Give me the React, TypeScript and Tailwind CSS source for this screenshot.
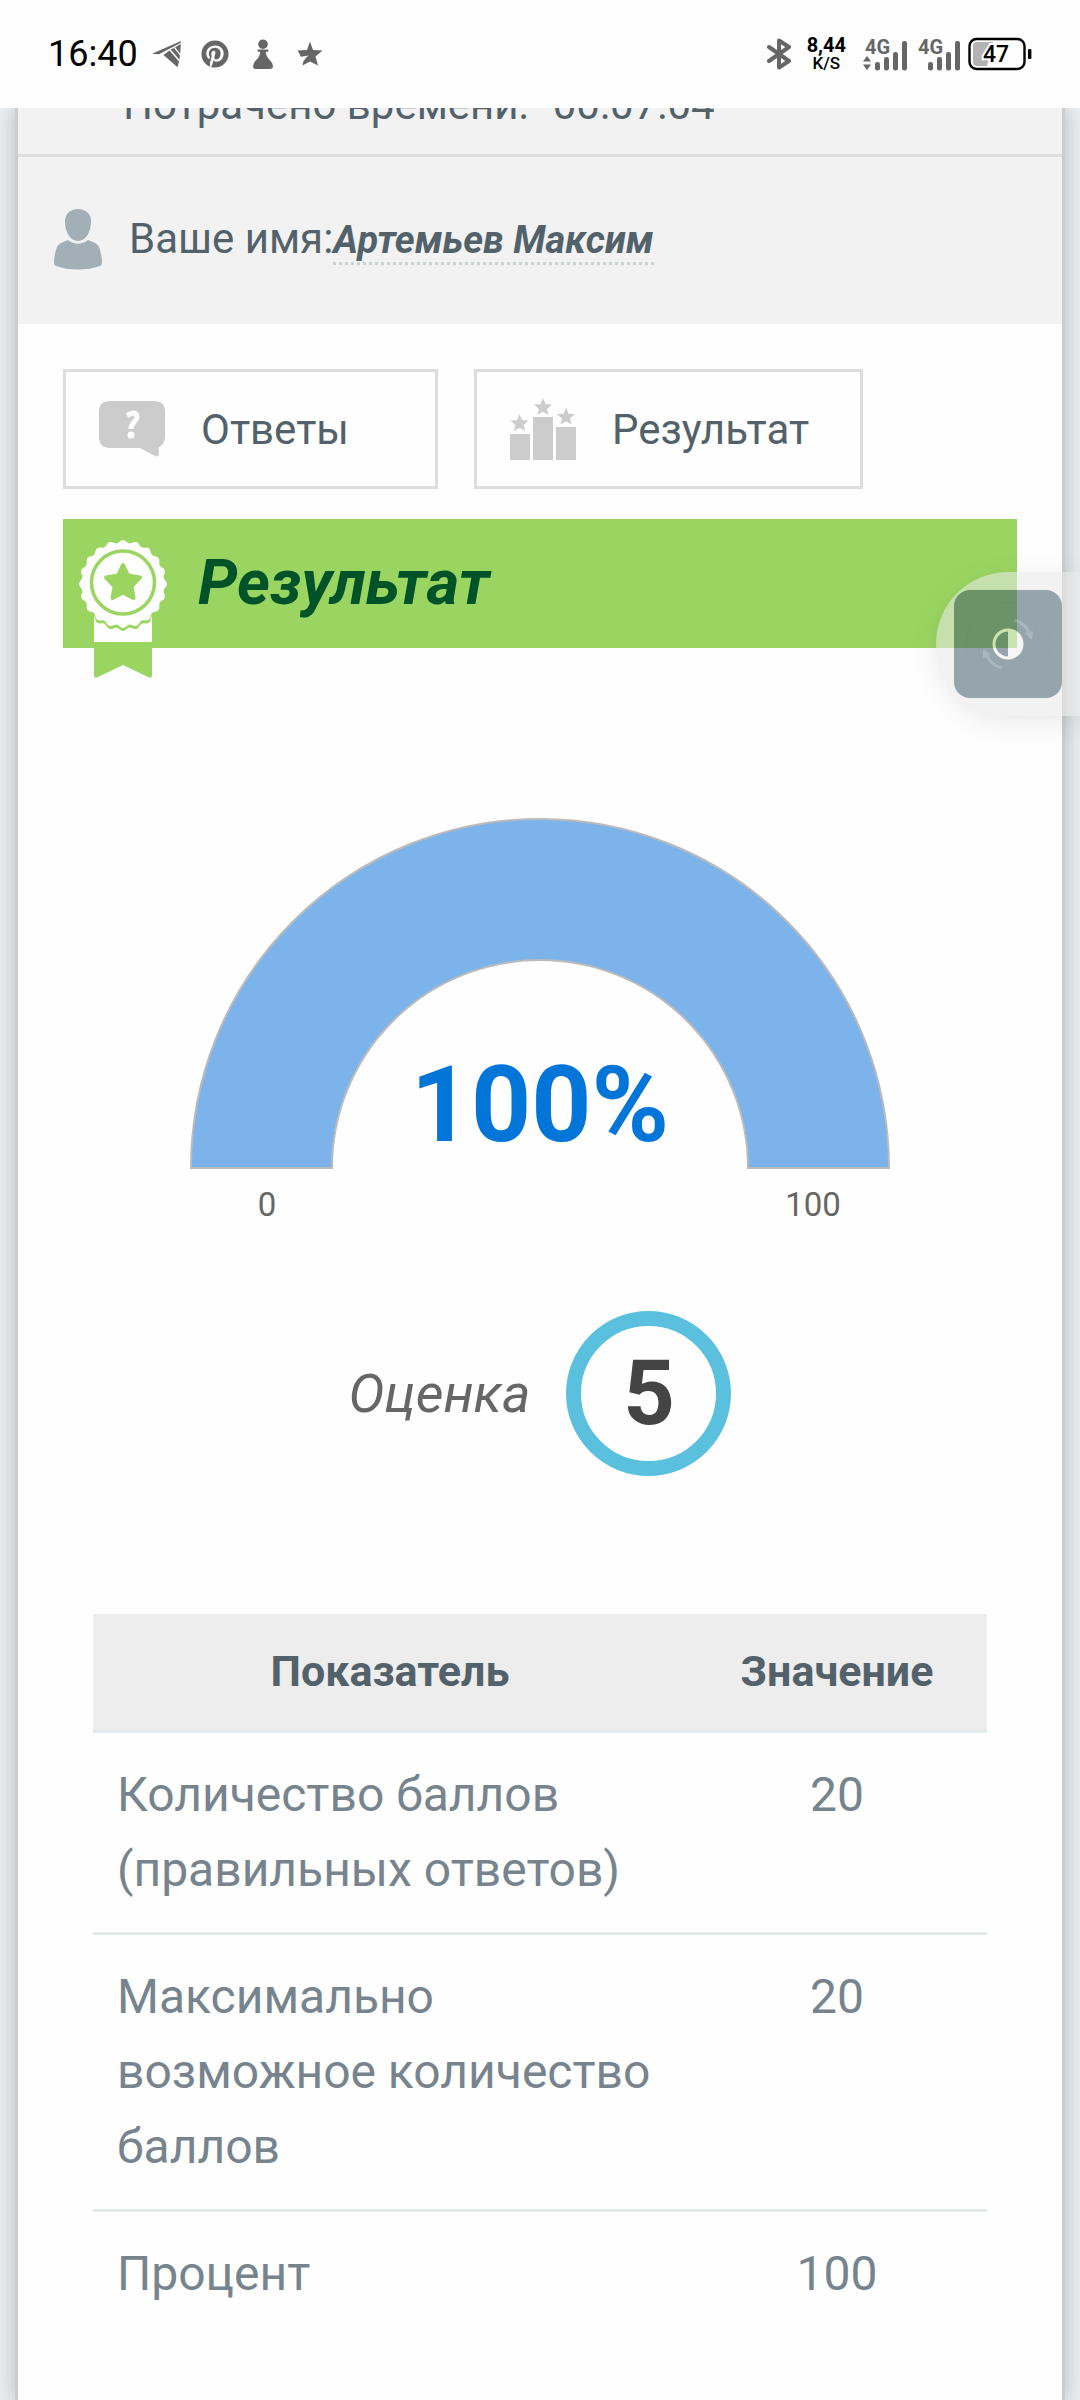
import { FaPinterest } from "react-icons/fa";

const rows = [
  { label: "Количество баллов (правильных ответов)", value: "20" },
  { label: "Максимально возможное количество баллов", value: "20" },
  { label: "Процент", value: "100" },
];

export default function App() {
  return (
    <div className="relative min-h-screen overflow-hidden bg-[#e9edef] font-['Roboto',sans-serif] text-[#53626a]">
      <StatusBar />

      <main className="mx-[15px] min-h-[2292px] border-x-[3px] border-[#cbcccb] bg-[#fefefe] shadow-[0_0_18px_rgba(0,0,0,0.22)]">
        <section className="bg-[#f2f2f2] text-[42px] leading-[60px]">
          <div className="flex gap-6 border-b-[3px] border-[#dddddd] pb-[19px] pl-[105px]">
            <span className="-mt-[33px]">Потрачено времени:</span>
            <span className="-mt-[33px]">00:07:04</span>
          </div>
          <div className="flex items-center pt-[51px] pb-[54px] pl-[35px]">
            <UserIcon />
            <p className="pl-[26px]">
              Ваше имя:
              <span className="border-b-[3px] border-dotted border-[#ccd3d7] text-[38px] font-bold italic">Артемьев Максим</span>
            </p>
          </div>
        </section>

        <div className="px-[45px] pt-[45px]">
          <div className="flex gap-9">
            <TabButton label="Ответы" icon={<AnswersIcon />} />
            <TabButton label="Результат" icon={<PodiumIcon />} />
          </div>

          <div className="relative mt-[30px] flex h-[129px] items-center bg-[#9bd561] pl-[135px]">
            <Badge />
            <h1 className="text-[63px] font-bold italic text-[#005229]">Результат</h1>
          </div>
        </div>

        <Gauge />

        <div className="mt-[84px] flex items-center justify-center gap-9">
          <span className="text-[54px] italic text-[#666666]">Оценка</span>
          <span className="flex size-[165px] items-center justify-center rounded-full border-[15px] border-[#5bc0de] text-[90px] font-bold text-[#444444]">5</span>
        </div>

        <div className="px-[75px] pt-[138px]">
          <table className="w-full border-collapse">
            <thead>
              <tr className="border-b-[3px] border-[#e4e9eb] bg-[#ededed] text-[43px] leading-[67px]">
                <th className="px-6 pt-6 pb-[25px] font-bold">Показатель</th>
                <th className="w-[300px] px-6 pt-6 pb-[25px] font-bold">Значение</th>
              </tr>
            </thead>
            <tbody>
              {rows.map((r) => (
                <tr key={r.label} className="border-b-[3px] border-[#e4e9eb] text-[48px] leading-[75px] text-[#77848e] last:border-b-0">
                  <td className="px-6 pt-6 pb-[25px] align-top">{r.label}</td>
                  <td className="px-6 pt-6 pb-[25px] text-center align-top">{r.value}</td>
                </tr>
              ))}
            </tbody>
          </table>
        </div>
      </main>

      {/* floating theme switch, docked to the right edge */}
      <div className="absolute top-[572px] right-0 flex h-36 w-36 items-center rounded-l-full bg-[#e9e9e9] pl-[18px] opacity-[0.56] shadow-[0_6px_24px_rgba(0,0,0,0.15)]">
        <button type="button" aria-label="Тема" className="size-[108px] rounded-2xl bg-[#46606d]">
          <ContrastIcon />
        </button>
      </div>
    </div>
  );
}

function StatusBar() {
  return (
    <header className="relative z-10 flex h-[108px] items-center justify-between bg-[#fefefe] pr-12 pl-12 text-[#666666]">
      <div className="flex items-center">
        <span className="text-[36px] text-black">16:40</span>
        <svg viewBox="0 0 30 28" className="ml-[14px] h-7 w-[30px]" fill="currentColor">
          <path d="M0 13.8 L29 1 L28.5 3 L14.5 10.2 L7 14.2 Z" />
          <path d="M11.5 15 L17.5 10.6 L27 21.5 L25.5 27.2 Z" />
          <path d="M18.6 9.6 L22 8 L28 15.5 L27.4 19.8 Z" />
          <path d="M23 7.2 L28.8 4 L28.2 13.4 Z" />
        </svg>
        <FaPinterest className="ml-[19px] size-7" />
        <svg viewBox="0 0 20 30" className="ml-6 h-[30px] w-5" fill="currentColor">
          <circle cx="10" cy="5.2" r="4.8" />
          <path d="M5 10.5 H15 Q16 11.5 15 12.8 H12.8 Q13 17.5 16.5 20.8 Q20 24 20 27.5 Q20 30 16 30 H4 Q0 30 0 27.5 Q0 24 3.5 20.8 Q7 17.5 7.2 12.8 H5 Q4 11.5 5 10.5 Z" />
        </svg>
        <svg viewBox="0 0 26 26" className="ml-6 size-[26px]" fill="currentColor">
          <path d="M13 .5 L16 9 L25.5 9.5 L18.5 15.5 L21 24.5 L13 20.5 L5.5 24.5 Q5.5 19.5 11.5 14.5 L3.8 15.8 Q3 13.2 .5 9.5 L10 9 Z" />
        </svg>
      </div>

      <div className="flex items-center">
        <svg viewBox="0 0 24 32" className="h-8 w-6" fill="none" stroke="currentColor" strokeWidth="4" strokeLinecap="round" strokeLinejoin="round">
          <path d="M2 9 L22 23 L12 29.5 V2.5 L22 9 L2 23" />
        </svg>
        <div className="mr-2 ml-4 flex flex-col items-center text-black">
          <span className="text-[20px] leading-[18px] font-bold">8,44</span>
          <span className="text-[17px] leading-[18px] font-medium">K/S</span>
        </div>
        <Signal arrows />
        <Signal />
        <svg viewBox="0 0 64 34" className="ml-2 h-[34px] w-16">
          <path d="M5 9 Q5 5 9 5 H25 L19 29 H9 Q5 29 5 25 Z" fill="#b3b3b3" />
          <rect x="1.5" y="2" width="55" height="30" rx="7" fill="none" stroke="#000" strokeWidth="2.4" />
          <rect x="60" y="12" width="3.4" height="10" rx="1" fill="#000" />
          <text x="28" y="25" textAnchor="middle" fontSize="23" fontWeight="500" stroke="#fefefe" strokeWidth="4" paintOrder="stroke" fill="#000">47</text>
        </svg>
      </div>
    </header>
  );
}

function Signal({ arrows }: { arrows?: boolean }) {
  return (
    <svg viewBox="0 -6 46 46" className="ml-[7px] size-[46px]" fill="currentColor">
      <text x="4" y="17" fontSize="20" fontWeight="700">4G</text>
      {arrows && <path d="M2 24.5 L6 19 L10 24.5 Z M2 27.5 H10 L6 33 Z" />}
      <rect x="14" y="25" width="5" height="8.5" rx="2.2" />
      <rect x="23" y="20" width="5" height="13.5" rx="2.2" />
      <rect x="32" y="15" width="5" height="18.5" rx="2.2" />
      <rect x="41" y="4" width="5" height="29.5" rx="2.2" />
    </svg>
  );
}

function TabButton({ label, icon }: { label: string; icon: React.ReactNode }) {
  return (
    <button type="button" className="flex h-[120px] min-w-[375px] items-center gap-9 border-[3px] border-[#dddddd] pr-[51px] pl-[33px] text-[42px]">
      {icon}
      {label}
    </button>
  );
}

function UserIcon() {
  return (
    <svg viewBox="0 0 50 62" className="h-[62px] w-[50px]" fill="#a2afb7">
      <path d="M25 1 C33 1 38 6 38 13 C38 24 33 33 25 33 C17 33 12 24 12 13 C12 6 17 1 25 1 Z" />
      <path d="M15 32 Q25 39.5 35 32 L42 35 Q46 37 47 42 Q49 49 49 55 Q49 57 47 58 Q37 61.5 25 61.5 Q13 61.5 3 58 Q1 57 1 55 Q1 49 3 42 Q4 37 8 35 Z" />
    </svg>
  );
}

function AnswersIcon() {
  return (
    <svg viewBox="0 -2 66 62" className="h-[62px] w-[66px]">
      <path d="M11 1 H55 Q66 1 66 12 V37 Q66 44 59.5 47.5 L60 53 Q60 57.5 56 56 L41 48 H11 Q0 48 0 37 V12 Q0 1 11 1 Z" fill="#cccccc" />
      <path d="M28 15.5 Q38 10 38 17 C38 21 32 23 32 29" fill="none" stroke="#fff" strokeWidth="5" />
      <circle cx="32" cy="35" r="3.5" fill="#fff" />
    </svg>
  );
}

const STAR = "M0 -9.5 L2.6 -3.2 L9 -2.9 L4 1.4 L5.6 7.6 L0 4.2 L-5.6 7.6 L-4 1.4 L-9 -2.9 L-2.6 -3.2 Z";

function PodiumIcon() {
  return (
    <svg viewBox="0 0 66 62" className="h-[62px] w-[66px]" fill="#cccccc">
      <rect x="0" y="36" width="20" height="26" />
      <rect x="23" y="19" width="20" height="43" />
      <rect x="46" y="29" width="20" height="33" />
      <path d={STAR} transform="translate(9.5 25.5)" />
      <path d={STAR} transform="translate(33 9.5)" />
      <path d={STAR} transform="translate(56 19)" />
    </svg>
  );
}

const ROSETTE = Array.from({ length: 121 }, (_, i) => {
  const a = (i / 120) * Math.PI * 2;
  const r = 42.6 + 1.5 * Math.cos(a * 20);
  return `${(44 + r * Math.sin(a)).toFixed(1)} ${(45 + r * Math.cos(a)).toFixed(1)}`;
}).join(" L");

function Badge() {
  return (
    <svg viewBox="0 0 88 140" className="absolute top-5 left-4 h-[140px] w-[88px]">
      <path d="M15 60 H73 V103 H15 Z" fill="#fefefe" />
      <path d="M15 103 H73 V136 Q73 140 69 138 L44 126 L19 138 Q15 140 15 136 Z" fill="#9bd561" />
      <path d={`M${ROSETTE} Z`} transform="translate(0 3)" fill="#9bd561" />
      <path d={`M${ROSETTE} Z`} fill="#fefefe" />
      <circle cx="44" cy="43.5" r="31.5" fill="none" stroke="#9bd561" strokeWidth="3.5" />
      <path
        d="M44 26 L49 36.5 L61 38.5 L52.5 47.5 L54.5 59 L44 53.5 L33.5 59 L35.5 47.5 L27 38.5 L39 36.5 Z"
        fill="#9bd561"
        stroke="#9bd561"
        strokeWidth="4"
        strokeLinejoin="round"
      />
    </svg>
  );
}

function Gauge() {
  return (
    <svg viewBox="0 0 700 410" className="mx-auto mt-[169px] h-[410px] w-[700px]" textAnchor="middle">
      <path d="M1 351 A349 349 0 0 1 699 351 H558 A208 208 0 0 0 142 351 Z" fill="#7cb3ea" stroke="#bbbbbb" strokeWidth="2" />
      <text x="350" y="324" fontSize="105" fontWeight="700" fill="#0275d8">100%</text>
      <text x="77" y="399" fontSize="33" fill="#666666">0</text>
      <text x="623" y="399" fontSize="33" fill="#666666">100</text>
    </svg>
  );
}

function ContrastIcon() {
  return (
    <svg viewBox="0 0 108 108" className="size-full" fill="none">
      <circle cx="54" cy="54" r="42" stroke="#435c69" />
      <path d="M60 30 Q72 33 76 45" stroke="#6a808c" strokeWidth="3" />
      <path d="M71 43 L78 50 L79 41 Z" fill="#6a808c" />
      <path d="M48 78 Q36 75 32 63" stroke="#6a808c" strokeWidth="3" />
      <path d="M37 65 L29 59 L29 68 Z" fill="#6a808c" />
      <circle cx="54" cy="54" r="14" stroke="#f0f0f0" strokeWidth="3" />
      <path d="M54 40 A14 14 0 0 1 54 68 Z" fill="#f0f0f0" />
    </svg>
  );
}
